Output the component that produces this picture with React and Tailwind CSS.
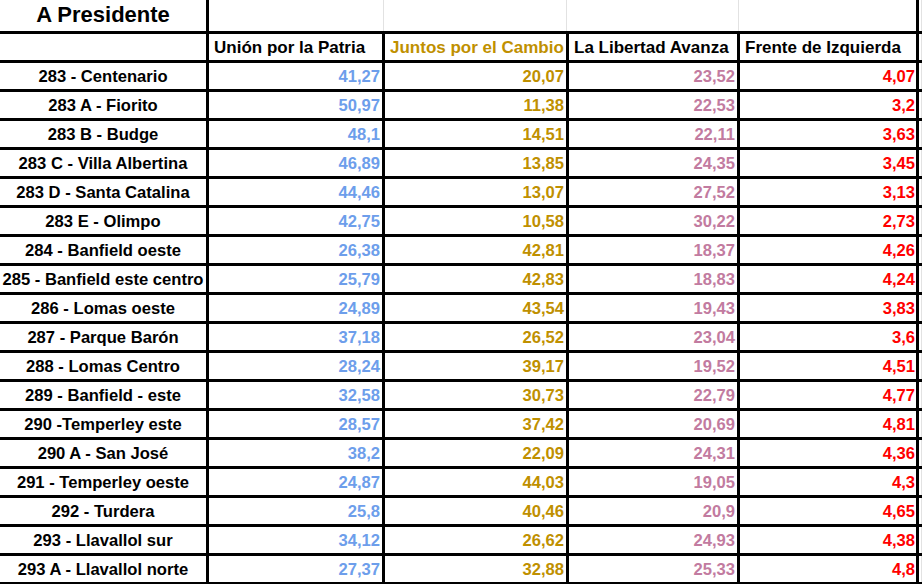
const parties = [
  { name: 'Unión por la Patria', color: 'text-black' },
  { name: 'Juntos por el Cambio', color: 'text-[#bf9000]' },
  { name: 'La Libertad Avanza', color: 'text-black' },
  { name: 'Frente de Izquierda', color: 'text-black' },
]

const numColors = ['text-[#6d9eeb]', 'text-[#bf9000]', 'text-[#c27ba0]', 'text-[#ff0000]']

// widths include the 3px right border of each column
const widths = ['w-[176px]', 'w-[184px]', 'w-[171px]', 'w-[179px]']
const padRight = ['pr-[2px]', 'pr-[2px]', 'pr-[2px]', 'pr-[1px]']

const rows = [
  ['283 - Centenario', '41,27', '20,07', '23,52', '4,07'],
  ['283 A - Fiorito', '50,97', '11,38', '22,53', '3,2'],
  ['283 B - Budge', '48,1', '14,51', '22,11', '3,63'],
  ['283 C - Villa Albertina', '46,89', '13,85', '24,35', '3,45'],
  ['283 D - Santa Catalina', '44,46', '13,07', '27,52', '3,13'],
  ['283 E - Olimpo', '42,75', '10,58', '30,22', '2,73'],
  ['284 - Banfield oeste', '26,38', '42,81', '18,37', '4,26'],
  ['285 - Banfield este centro', '25,79', '42,83', '18,83', '4,24'],
  ['286 - Lomas oeste', '24,89', '43,54', '19,43', '3,83'],
  ['287 - Parque Barón', '37,18', '26,52', '23,04', '3,6'],
  ['288 - Lomas Centro', '28,24', '39,17', '19,52', '4,51'],
  ['289 - Banfield - este', '32,58', '30,73', '22,79', '4,77'],
  ['290 -Temperley este', '28,57', '37,42', '20,69', '4,81'],
  ['290 A - San José', '38,2', '22,09', '24,31', '4,36'],
  ['291 - Temperley oeste', '24,87', '44,03', '19,05', '4,3'],
  ['292 - Turdera', '25,8', '40,46', '20,9', '4,65'],
  ['293 - Llavallol sur', '34,12', '26,62', '24,93', '4,38'],
  ['293 A - Llavallol norte', '27,37', '32,88', '25,33', '4,8'],
]

function Tail() {
  return <div className="w-[3px] h-full border-r border-[#e2e2e2]" />
}

export default function App() {
  return (
    <div className="w-[922px] h-[584px] overflow-hidden bg-white font-['Liberation_Sans',Arial,sans-serif] font-bold text-black">
      <div className="flex h-[34px] border-b-[3px] border-black">
        <div className="w-[209px] h-full border-r-[3px] border-black flex items-center justify-center text-[22px] leading-none pb-[2px]">
          A Presidente
        </div>
        <div className="w-[175px] h-full border-r border-[#e2e2e2]" />
        <div className="w-[183px] h-full border-r border-[#e2e2e2]" />
        <div className="w-[172px] h-full border-r border-[#e2e2e2]" />
        <div className="w-[180px] h-full border-r-[3px] border-black" />
        <Tail />
      </div>

      <div className="flex h-[29px] border-b-[3px] border-black">
        <div className="w-[209px] h-full border-r-[3px] border-black" />
        {parties.map((p, i) => (
          <div
            key={p.name}
            className={`${widths[i]} h-full border-r-[3px] border-black flex items-center pl-[5px] pt-[2px] text-[17px] whitespace-nowrap ${p.color}`}>
            {p.name}
          </div>
        ))}
        <Tail />
      </div>

      {rows.map(([label, ...vals]) => (
        <div key={label} className="flex h-[29px] border-b-[3px] border-black">
          <div className="w-[209px] h-full border-r-[3px] border-black flex items-center justify-center pt-[2px] text-[16.6px] whitespace-nowrap">
            {label}
          </div>
          {vals.map((v, i) => (
            <div
              key={i}
              className={`${widths[i]} h-full border-r-[3px] border-black flex items-center justify-end pt-[2px] text-[16.6px] ${padRight[i]} ${numColors[i]}`}>
              {v}
            </div>
          ))}
          <Tail />
        </div>
      ))}
    </div>
  )
}
